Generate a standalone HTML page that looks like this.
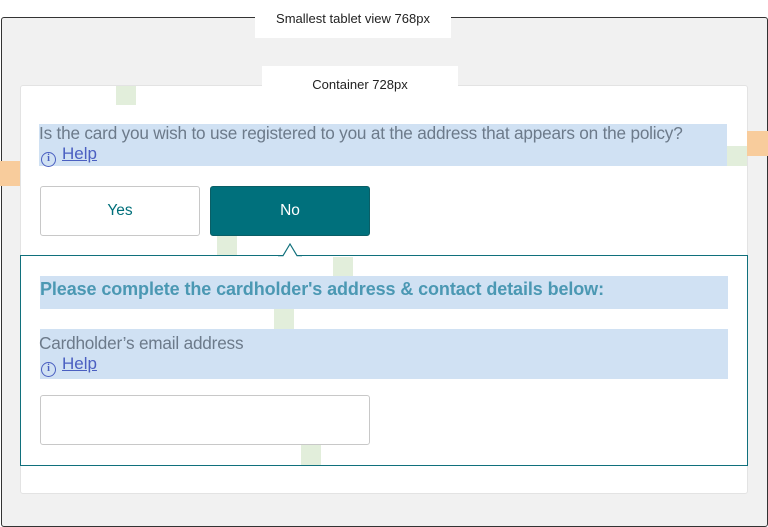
<!DOCTYPE html>
<html><head><style>
*{margin:0;padding:0;box-sizing:border-box}
body{width:768px;height:527px;background:#fff;position:relative;overflow:hidden;font-family:"Liberation Sans",sans-serif}
.a{position:absolute}
.g{position:absolute;background:#e2eedb}
.o{position:absolute;background:#f8cc9c}
.b{position:absolute;background:#d0e1f3}
.t{color:#6c7a8a;font-size:17.2px;letter-spacing:-0.2px;white-space:nowrap}
.help{color:#4a5fc1;text-decoration:underline;font-size:17px}
.ic{display:inline-block;width:15px;height:15px;border:1.5px solid #4a5fc1;border-radius:50%;color:#4a5fc1;font-size:10px;font-weight:bold;text-align:center;line-height:12px;vertical-align:-2px;margin-right:6px;font-family:"Liberation Serif",serif}
</style></head><body>
<div class="a" style="left:1px;top:17px;width:767px;height:510px;background:#f1f1f1;border:1.5px solid #333;border-radius:3px"></div>
<div class="a" style="left:255px;top:0;width:196px;height:38px;background:#fff;text-align:center;font-size:13px;line-height:38px;color:#222">Smallest tablet view 768px</div>
<div class="a" style="left:20px;top:85px;width:728px;height:409px;background:#fff;border:1px solid #e3e3e3;border-radius:3px"></div>
<div class="a" style="left:262px;top:66px;width:196px;height:24px;background:#fff;text-align:center;font-size:13px;line-height:38px;color:#222">Container 728px</div>
<div class="g" style="left:116px;top:86px;width:20px;height:19px"></div>
<div class="b" style="left:39px;top:124px;width:688px;height:42px"></div>
<div class="g" style="left:727px;top:146px;width:20px;height:20px"></div>
<div class="o" style="left:0;top:161px;width:20px;height:25px"></div>
<div class="o" style="left:747px;top:131px;width:21px;height:25px"></div>
<div class="a t" style="left:39px;top:123px;line-height:20px">Is the card you wish to use registered to you at the address that appears on the policy?</div>
<div class="a" style="left:41px;top:144px;line-height:20px"><span class="ic">i</span><span class="help">Help</span></div>
<div class="a" style="left:40px;top:186px;width:160px;height:50px;border:1px solid #c8c8c8;border-radius:3px;text-align:center;line-height:48px;color:#006f7a;font-size:15.5px">Yes</div>
<div class="a" style="left:210px;top:186px;width:160px;height:50px;background:#00707c;border:1px solid #0a5e66;border-radius:3px;text-align:center;line-height:48px;color:#fff;font-size:15.5px">No</div>
<div class="g" style="left:217px;top:236px;width:20px;height:19px"></div>
<div class="a" style="left:20px;top:255px;width:728px;height:211px;border:1.5px solid #10707c"></div>
<svg class="a" style="left:278px;top:241px" width="24" height="16"><rect x="5" y="13" width="14" height="4" fill="#fff"/><path d="M0 14.7 L5 14.7 L12 3 L19 14.7 L24 14.7" fill="none" stroke="#10707c" stroke-width="1.2"/></svg>
<div class="g" style="left:333px;top:257px;width:20px;height:19px"></div>
<div class="b" style="left:40px;top:276px;width:688px;height:33px"></div>
<div class="a" style="left:40px;top:278px;font-size:18px;font-weight:bold;color:#4b98b3;line-height:22px;white-space:nowrap;letter-spacing:-0.1px">Please complete the cardholder's address &amp; contact details below:</div>
<div class="g" style="left:274px;top:309px;width:20px;height:20px"></div>
<div class="b" style="left:40px;top:329px;width:688px;height:50px"></div>
<div class="a t" style="left:39px;top:333px;line-height:20px">Cardholder’s email address</div>
<div class="a" style="left:41px;top:354px;line-height:20px"><span class="ic">i</span><span class="help">Help</span></div>
<div class="a" style="left:40px;top:395px;width:330px;height:50px;border:1px solid #c8c8c8;border-radius:3px;background:#fff"></div>
<div class="g" style="left:301px;top:445px;width:20px;height:20px"></div>
</body></html>
